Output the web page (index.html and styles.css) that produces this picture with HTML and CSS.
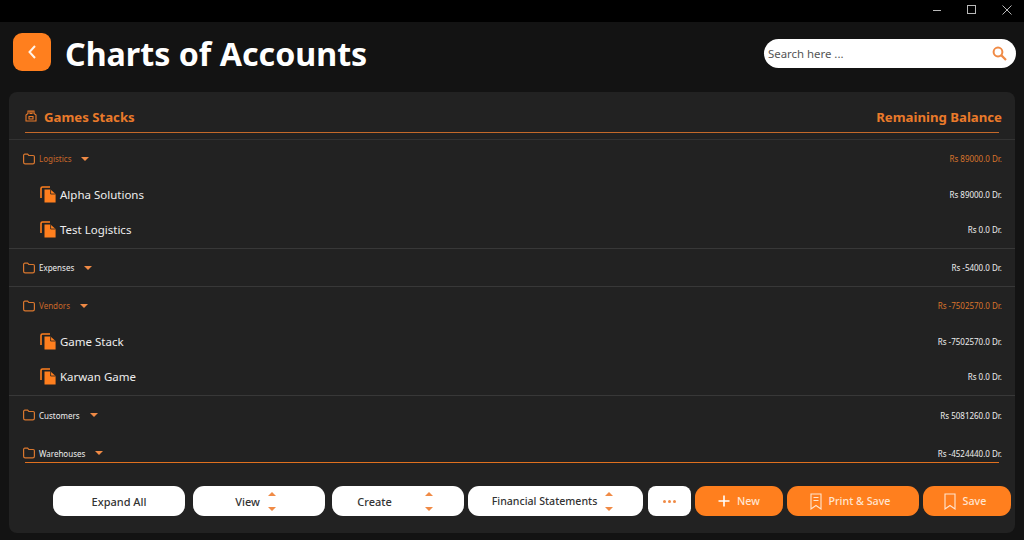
FILE: index.html
```html
<!DOCTYPE html>
<html lang="en">
<head>
<meta charset="utf-8">
<title>Charts of Accounts</title>
<link rel="stylesheet" href="styles.css">
</head>
<body>
<svg class="defs" width="0" height="0" aria-hidden="true">
  <symbol id="folder" viewBox="0 0 12 12"><path d="M.6 2.400A1.200 1.200 0 0 1 1.800 1.200h2.800l1.200 1.300h4.400a1.200 1.200 0 0 1 1.200 1.200v5.600a1.600 1.600 0 0 1-1.600 1.600H2.200A1.600 1.600 0 0 1 .6 9.300z" fill="none" stroke="currentColor" stroke-width="1.200"/></symbol>
  <symbol id="doc" viewBox="0 0 16 17"><path d="M1 12V2.500A1.500 1.500 0 0 1 2.500 1H10" fill="none" stroke="#ff7f1e" stroke-width="1.600"/><path d="M4.500 3.400H10.500L15.600 8V16.600H4.500z" fill="#ff7f1e"/><path d="M10.600 3.400V8H15.600" fill="none" stroke="#222" stroke-width=".8"/></symbol>
  <symbol id="updown" viewBox="0 0 10 19"><path d="M5 0 9 4H1zM5 19 1 15h8z" fill="#f08a45"/></symbol>
</svg>
<div class="titlebar">
  <svg class="win" viewBox="0 0 10 10"><path d="M1 5.500H9" stroke="#b9b9b9"/></svg>
  <svg class="win" viewBox="0 0 10 10"><rect x=".5" y=".5" width="8" height="8" fill="none" stroke="#b9b9b9"/></svg>
  <svg class="win" viewBox="0 0 10 10"><path d="M.5.5 9.500 9.500M9.500.5.5 9.500" stroke="#b9b9b9"/></svg>
</div>
<header class="header">
  <button class="back" aria-label="Back"><svg width="10" height="16" viewBox="0 0 10 16"><path d="M8 2 2.500 8 8 14" fill="none" stroke="#fff3e8" stroke-width="2"/></svg></button>
  <h1 class="title">Charts of Accounts</h1>
  <div class="search">
    <span class="search-text">Search here ...</span>
    <svg width="15" height="15" viewBox="0 0 15 15"><circle cx="6" cy="6" r="4.400" fill="none" stroke="#f08a45" stroke-width="2"/><path d="M9.400 9.400 14 14" stroke="#f08a45" stroke-width="2.200"/></svg>
  </div>
</header>
<main class="panel">
  <div class="panel-head">
    <div class="head-left">
      <svg class="head-icon" viewBox="0 0 12 12"><path d="M1 11V5L3 3.500V1H9V3.500L11 5V11zM4 6.500H8V9H4zM5 1V3.500H7V1" fill="none" stroke="#ea7a2a" stroke-width="1.100"/></svg>
      <span>Games Stacks</span>
    </div>
    <span class="head-right">Remaining Balance</span>
  </div>
  <div class="list">
    <div class="group open orange"><svg class="folder"><use href="#folder"/></svg><span>Logistics</span><i class="caret"></i><span class="amt">Rs 89000.0 Dr.</span></div>
    <div class="leaf"><svg class="doc"><use href="#doc"/></svg><span class="name">Alpha Solutions</span><span class="amt">Rs 89000.0 Dr.</span></div>
    <div class="leaf last"><svg class="doc"><use href="#doc"/></svg><span class="name">Test Logistics</span><span class="amt">Rs 0.0 Dr.</span></div>
    <div class="group last"><svg class="folder"><use href="#folder"/></svg><span>Expenses</span><i class="caret"></i><span class="amt">Rs -5400.0 Dr.</span></div>
    <div class="group open orange"><svg class="folder"><use href="#folder"/></svg><span>Vendors</span><i class="caret"></i><span class="amt">Rs -7502570.0 Dr.</span></div>
    <div class="leaf"><svg class="doc"><use href="#doc"/></svg><span class="name">Game Stack</span><span class="amt">Rs -7502570.0 Dr.</span></div>
    <div class="leaf last"><svg class="doc"><use href="#doc"/></svg><span class="name">Karwan Game</span><span class="amt">Rs 0.0 Dr.</span></div>
    <div class="group"><svg class="folder"><use href="#folder"/></svg><span>Customers</span><i class="caret"></i><span class="amt">Rs 5081260.0 Dr.</span></div>
    <div class="group"><svg class="folder"><use href="#folder"/></svg><span>Warehouses</span><i class="caret"></i><span class="amt">Rs -4524440.0 Dr.</span></div>
  </div>
  <div class="list-end"></div>
  <div class="toolbar">
    <button class="btn w132">Expand All</button>
    <button class="btn w132 view">View<svg class="updown"><use href="#updown"/></svg></button>
    <button class="btn w132 create">Create<svg class="updown"><use href="#updown"/></svg></button>
    <button class="btn fin">Financial Statements<svg class="updown"><use href="#updown"/></svg></button>
    <button class="btn more" aria-label="More"><i></i><i></i><i></i></button>
    <button class="btn solid new"><svg width="12" height="12" viewBox="0 0 12 12"><path d="M6 .5V11.500M.5 6H11.500" stroke="#fff" stroke-width="1.600"/></svg>New</button>
    <button class="btn solid print"><svg width="12" height="17" viewBox="0 0 12 17"><path d="M1 1H11V16L6 12.500 1 16zM3.500 4.500H8.500M3.500 7.500H8.500" fill="none" stroke="#ffe5d0" stroke-width="1.100"/></svg>Print &amp; Save</button>
    <button class="btn solid save"><svg width="12" height="17" viewBox="0 0 12 17"><path d="M1 1H11V16L6 12.500 1 16z" fill="none" stroke="#ffe5d0" stroke-width="1.100"/></svg>Save</button>
  </div>
</main>
</body>
</html>
```
FILE: styles.css
```css
* { box-sizing: border-box; }
html, body { margin: 0; height: 100%; }
body {
  width: 1024px;
  height: 540px;
  overflow: hidden;
  background: #131313;
  color: #fff;
  font-family: "Noto Sans", "Open Sans", sans-serif;
  display: flex;
  flex-direction: column;
}
.defs { position: absolute; }
.titlebar {
  height: 22px;
  background: #000;
  display: flex;
  justify-content: flex-end;
  align-items: center;
  gap: 25px;
  padding: 0 12px 2px 0;
}
.win { width: 10px; height: 10px; }
.header {
  height: 70px;
  display: flex;
  align-items: center;
  padding: 0 8px 10px 13px;
}
.back {
  width: 38px;
  height: 38px;
  border: 0;
  border-radius: 9px;
  background: #ff7f1e;
  display: flex;
  align-items: center;
  justify-content: center;
  padding: 0;
}
.title {
  margin: 3px 0 0 14px;
  font-size: 32.200px;
  font-weight: 700;
  line-height: 38px;
  flex: 1;
}
.search {
  width: 252px;
  height: 29px;
  margin-top: 2px;
  border-radius: 15px;
  background: #fff;
  color: #555;
  font-size: 11.400px;
  display: flex;
  align-items: center;
  justify-content: space-between;
  padding: 0 9px 0 4px;
}
.panel {
  margin: 0 9px 7px;
  flex: 1;
  background: #222;
  border-radius: 8px;
  display: flex;
  flex-direction: column;
  min-height: 0;
}
.panel-head {
  margin: 0 16px;
  height: 41px;
  padding-top: 15px;
  border-bottom: 1px solid #c4692a;
  color: #ea7a2a;
  font-size: 13.200px;
  font-weight: 700;
  display: flex;
  justify-content: space-between;
  white-space: nowrap;
  line-height: 20px;
}
.head-right { margin-right: -3px; }
.head-left { display: flex; align-items: flex-start; gap: 7px; }
.head-icon { width: 12px; height: 12px; margin-top: 3px; }
.list {
  margin-top: 6px;
  height: 323px;
  overflow: hidden;
  border-top: 1px solid #333;
}
.group, .leaf {
  display: flex;
  align-items: center;
  white-space: nowrap;
  padding-right: 13px;
}
.group {
  height: 38px;
  font-size: 8px;
  padding-left: 14px;
  color: #eee;
}
.group.open { height: 37px; }
.group.orange { color: #c9682a; }
.group.orange .amt { color: #d9742c; }
.group.last, .leaf.last { border-bottom: 1px solid #383838; }
.folder { width: 12px; height: 12px; color: #d9772e; margin-right: 4px; flex: none; }
.caret {
  width: 0;
  height: 0;
  margin-left: 10px;
  border-left: 4.500px solid transparent;
  border-right: 4.500px solid transparent;
  border-top: 4.500px solid #f08a45;
}
.amt { margin-left: auto; font-size: 8px; color: #eee; }
.leaf { height: 36px; padding-left: 31px; padding-bottom: 2px; }
.doc { width: 16px; height: 17px; flex: none; margin-right: 4px; }
.name { font-size: 11.500px; color: #eee; }
.list-end { margin: 0 16px; height: 1px; flex: none; background: #e0701f; }
.toolbar {
  display: flex;
  align-items: center;
  margin-top: 23px;
  padding-left: 44px;
  gap: 4px;
}
.btn {
  height: 30px;
  border: 0;
  border-radius: 11px;
  background: #fff;
  color: #333;
  font-family: inherit;
  font-size: 11px;
  font-weight: 500;
  display: flex;
  align-items: center;
  justify-content: center;
  padding: 0;
  white-space: nowrap;
}
.w132 { width: 132px; }
.updown { width: 10px; height: 19px; margin-left: 7px; }
.view { margin-left: 4px; padding-right: 6px; }
.create { margin-left: 3px; padding-right: 5px; }
.create .updown { margin-left: 32px; }
.fin { width: 175px; padding-right: 5px; font-size: 10.600px; }
.more { width: 43px; gap: 2px; margin-left: 1px; border-radius: 8px; }
.more i { width: 3px; height: 3px; border-radius: 50%; background: #f08a45; }
.solid { background: #ff7f1e; color: #ffe5d0; gap: 7px; font-size: 10.700px; }
.new { width: 88px; }
.print { width: 132px; padding-right: 6px; }
.save { width: 88px; padding-right: 4px; }
```
